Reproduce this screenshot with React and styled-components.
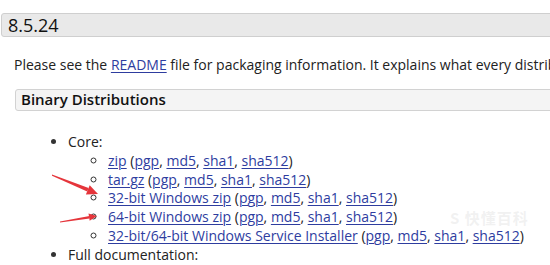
import React from 'react'
import styled, { createGlobalStyle } from 'styled-components'

const Global = createGlobalStyle`
  html, body {
    margin: 0;
    background: #fff;
    overflow: hidden;
  }
  body {
    font-family: "Open Sans", "Liberation Sans", sans-serif;
    color: #222;
  }
`

const Page = styled.div`
  position: relative;
  width: 550px;
  height: 265px;
  overflow: hidden;
  padding-top: 13px;
  box-sizing: border-box;
`

const VersionBar = styled.h3`
  margin: 0 -20px 0 1px;
  height: 24px;
  box-sizing: border-box;
  background: #e9e9e9;
  border: 1px solid #cfcfcf;
  border-radius: 3px 0 0 3px;
  padding-left: 6px;
  font-size: 18px;
  font-weight: 400;
  line-height: 22px;
  color: #111;
`

const Section = styled.div`
  padding-left: 14px;
`

const Text = styled.p`
  margin: 18px 0 0;
  font-size: 14px;
  line-height: 20px;
  white-space: nowrap;
`

const Link = styled.a`
  color: #2e3d9f;
  text-decoration: underline;
  text-underline-offset: 2px;
  text-decoration-thickness: 1px;
`

const SubBar = styled.h4`
  margin: 14px -20px 0 1px;
  height: 22px;
  box-sizing: border-box;
  background: #f4f4f4;
  border: 1px solid #d2d2d2;
  border-radius: 3px 0 0 3px;
  padding-left: 5px;
  font-size: 15px;
  font-weight: 600;
  line-height: 19px;
  color: #111;
`

const List = styled.ul`
  margin: 22px 0 0;
  padding-left: 54px;
  list-style: disc;
  font-size: 14px;
  line-height: 18.8px;
`

const SubList = styled.ul`
  margin: 0;
  padding-left: 40px;
  list-style: circle;
  white-space: nowrap;
`

const Item = styled.li`
  &::marker {
    color: #333;
  }
`

const Arrows = styled.svg`
  position: absolute;
  left: 0;
  top: 0;
  pointer-events: none;
`

const Watermark = styled.span`
  position: absolute;
  left: 450px;
  top: 210px;
  font-family: "Noto Sans CJK SC", "Open Sans", sans-serif;
  font-size: 15px;
  line-height: 15px;
  font-weight: 700;
  color: rgba(215, 215, 215, 0.35);
  letter-spacing: 1px;
`

const Hashes = ({ label }) => (
  <>
    <Link href="#">{label}</Link> (<Link href="#">pgp</Link>, <Link href="#">md5</Link>,{' '}
    <Link href="#">sha1</Link>, <Link href="#">sha512</Link>)
  </>
)

export default function App() {
  return (
    <Page>
      <Global />
      <VersionBar>8.5.24</VersionBar>
      <Section>
        <Text>
          Please see the <Link href="#">README</Link> file for packaging information. It explains what every distribution contains.
        </Text>
        <SubBar>Binary Distributions</SubBar>
        <List>
          <Item>
            Core:
            <SubList>
              <Item><Hashes label="zip" /></Item>
              <Item><Hashes label="tar.gz" /></Item>
              <Item><Hashes label="32-bit Windows zip" /></Item>
              <Item><Hashes label="64-bit Windows zip" /></Item>
              <Item><Hashes label="32-bit/64-bit Windows Service Installer" /></Item>
            </SubList>
          </Item>
          <Item>Full documentation:</Item>
        </List>
      </Section>
      <Watermark>S 快懂百科</Watermark>
      <Arrows width="550" height="265" viewBox="0 0 550 265">
        <path d="M52 174.4 L88.6 188 L87.2 191.6 L52 175.8 Z" fill="#e5353b" />
        <path d="M98 194 L89.7 185.2 L85.9 194.4 Z" fill="#e5353b" />
        <path d="M60 221.5 L89.5 216 L89.6 218.4 L60 222.5 Z" fill="#e5353b" />
        <path d="M97 216 L88.5 213.6 L89.7 220.8 Z" fill="#e5353b" />
      </Arrows>
    </Page>
  )
}
